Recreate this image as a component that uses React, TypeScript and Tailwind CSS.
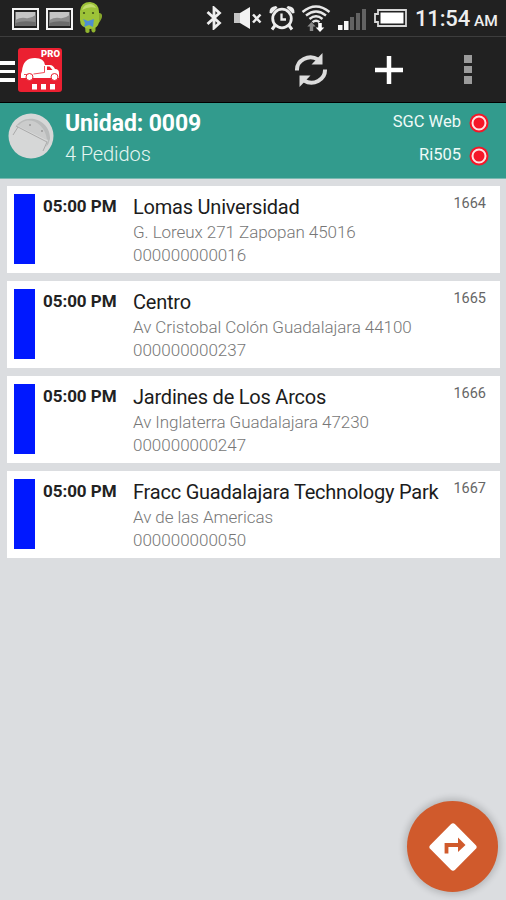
import { clsx } from "clsx";

type Order = {
  id: string;
  time: string;
  place: string;
  address: string;
  phone: string;
};

const orders: Order[] = [
  {
    id: "1664",
    time: "05:00 PM",
    place: "Lomas Universidad",
    address: "G. Loreux 271 Zapopan 45016",
    phone: "000000000016",
  },
  {
    id: "1665",
    time: "05:00 PM",
    place: "Centro",
    address: "Av Cristobal Colón Guadalajara 44100",
    phone: "000000000237",
  },
  {
    id: "1666",
    time: "05:00 PM",
    place: "Jardines de Los Arcos",
    address: "Av Inglaterra Guadalajara 47230",
    phone: "000000000247",
  },
  {
    id: "1667",
    time: "05:00 PM",
    place: "Fracc Guadalajara Technology Park",
    address: "Av de las Americas",
    phone: "000000000050",
  },
];

function PictureIcon({ className }: { className?: string }) {
  return (
    <svg viewBox="0 0 27 22" className={clsx("h-[22px] w-[27px] translate-y-px", className)}>
      <rect x="1" y="1" width="25" height="20" fill="#222" stroke="#f4f4f4" strokeWidth="2" />
      <rect x="3.5" y="4" width="20" height="14" fill="#c4c4c4" />
      <path d="M3.5 12q5-3 10-2t10-3v11h-20Z" fill="#8b8b8b" />
      <path d="M3.5 15q7-3 20-1v4h-20Z" fill="#6b6b6b" />
    </svg>
  );
}

function DroidIcon() {
  return (
    <svg viewBox="0 0 24 32" className="ml-1.5 h-8 w-6">
      <path d="M16 11q8-1 7 4t-7 9Z" fill="#86a52b" />
      <path d="M6 24h4.500v6q-2 2-4 0ZM12 24h4.500v5q-2 3-4 0Z" fill="#91b52f" />
      <path d="M1 9Q2 0 11 0q9 1 9 10v10q-1 7-9 7-10-1-10-9Z" fill="#9dc338" />
      <path d="M3 8q2-6 8-6 4 0 6 4-7-2-14 2Z" fill="#c2dc6d" />
      <circle cx="5" cy="11" r="1.1" fill="#44561b" />
      <circle cx="14" cy="11" r="1.1" fill="#44561b" />
      <path d="m4 17 5 2 6-2-1 8-4-2-5 2 1-4Z" fill="#4e8ed2" />
    </svg>
  );
}

function BluetoothIcon() {
  return (
    <svg viewBox="0 0 16 24" className="h-6 w-4" fill="none" stroke="#eee" strokeWidth="2.800">
      <path d="m1.500 6 12 11L8 22V2l5.500 5L1.500 18" />
    </svg>
  );
}

function MuteIcon() {
  return (
    <svg viewBox="0 0 28 24" className="ml-3 h-6 w-7">
      <path d="M0 7h6v10H0Z" fill="#c4c4c4" />
      <path d="m6 7 10-6v22L6 17Z" fill="#f2f2f2" />
      <path d="m19 8.500 7.500 8m0-8-7.500 8" stroke="#eee" strokeWidth="2.500" />
    </svg>
  );
}

function AlarmIcon() {
  return (
    <svg viewBox="0 0 26 26" className="ml-[7px] size-[26px]" fill="none" stroke="#ededed">
      <circle cx="13" cy="13.500" r="9.300" strokeWidth="2.800" />
      <path d="M12.500 8.500v6H17" strokeWidth="2.300" />
      <path d="m6 20.500-3 4m17-4 3 4" strokeWidth="3" />
      <path d="M.5 8Q0 1.500 7 1l1.500 1.500L2.500 8.500ZM25.500 8q.5-6.500-6.500-7L17.500 2.500l6 6Z" fill="#ededed" stroke="none" />
    </svg>
  );
}

function WifiIcon() {
  return (
    <svg viewBox="0 0 30 28" className="ml-[6px] h-7 w-[30px]" fill="none">
      <path d="M1.500 8Q15-3 28.500 8M5 11.500q10-8 20 0M8.500 15q6.500-5.500 13 0M11.500 18.200q3.500-3 7 0" stroke="#e8e8e8" strokeWidth="2.400" />
      <path d="m10.500 18 4.200 4.500h-2.500V27H8.800v-4.500H6.300Z" fill="#888" />
      <path d="m19 28-4.300-4.500h2.500V19h3.600v4.500h2.500Z" fill="#fff" />
    </svg>
  );
}

function SignalIcon() {
  return (
    <svg viewBox="0 0 28 21" className="ml-[7px] h-[21px] w-7 translate-y-px">
      <path d="M0 16h4.500v5H0ZM6 12h4.500v9H6Z" fill="#f5f5f5" />
      <path d="M12 8h4v13h-4ZM18 4h4v17h-4ZM24 0h4v21h-4Z" fill="#636363" />
    </svg>
  );
}

function BatteryIcon() {
  return (
    <svg viewBox="0 0 33 18" className="ml-2 h-[18px] w-[33px]">
      <path d="M4 1h28v16H4v-4H1V5h3Z" fill="#222" stroke="#d8d8d8" strokeWidth="1.800" />
      <path d="M6.500 3.500h23v11h-23Z" fill="#fff" />
    </svg>
  );
}

function StatusBar() {
  return (
    <div className="flex h-[37px] items-center border-b border-[#3d3d3d] bg-[#212121] pl-3 text-[#eee]">
      <PictureIcon />
      <PictureIcon className="ml-[7px]" />
      <DroidIcon />
      <div className="ml-[103px] flex items-center">
        <BluetoothIcon />
        <MuteIcon />
        <AlarmIcon />
        <WifiIcon />
        <SignalIcon />
        <BatteryIcon />
      </div>
      <div className="ml-2 flex items-baseline gap-1 pt-1 leading-6 whitespace-nowrap">
        <span className="text-[22px] font-medium tracking-[-0.15px]">11:54</span>
        <span className="text-[15.500px] font-medium tracking-[-0.2px]">AM</span>
      </div>
    </div>
  );
}

function AppLogo() {
  return (
    <div className="ml-[3px] flex h-[44px] w-[44px] flex-col rounded-[3px] bg-[#eb2031]">
      <span className="h-[10px] pr-[2px] text-right text-[9.500px] leading-[11px] font-black text-white">
        PRO
      </span>
      <svg viewBox="0 0 44 34" className="h-[34px] w-[44px]">
        <path d="M4 13Q5 0 17 0q9 0 10 7h5q3 0 5 4 4 0 4 4v5H3v-4Z" fill="#fff" />
        <path d="M29 8.500h2.500l3 3.500H29Z" fill="#eb2031" />
        <path d="M26.500 8v6.500l-11 1.500M6 16.500h5" fill="none" stroke="#eb2031" strokeWidth="0.800" />
        <circle cx="11.500" cy="19" r="3.500" fill="#fff" stroke="#eb2031" />
        <circle cx="36.500" cy="19" r="3.500" fill="#fff" stroke="#eb2031" />
        <path d="M14 26h5v5.500h-5ZM23 26h5v5.500h-5ZM32 26h5v5.500h-5Z" fill="#fff" />
      </svg>
    </div>
  );
}

function AppBar() {
  return (
    <div className="flex h-[66px] items-center border-b border-black bg-[#212121]">
      <div className="flex w-[15px] translate-y-0.5 flex-col gap-[5px]">
        <span className="h-[3.500px] bg-white" />
        <span className="h-[3.500px] bg-white" />
        <span className="h-[3.500px] bg-white" />
      </div>
      <AppLogo />
      <button type="button" aria-label="Actualizar" className="mr-px ml-auto">
        <svg viewBox="0 0 34 34" className="size-[34px]">
          <path d="M3 17.500A13.500 12.500 0 0 1 24 6.500" fill="none" stroke="#dcdcdc" strokeWidth="4" />
          <path d="M28.500 0v11.500H17.500Z" fill="#dcdcdc" />
          <path d="M31 16.500A13.500 12.500 0 0 1 10 27.500" fill="none" stroke="#dcdcdc" strokeWidth="4" />
          <path d="M5.500 34V22.500h11Z" fill="#dcdcdc" />
        </svg>
      </button>
      <button type="button" aria-label="Agregar" className="ml-[45px]">
        <svg viewBox="0 0 30 30" className="size-[30px]">
          <path d="M15 1v28M1 15h28" stroke="#fff" strokeWidth="4.500" />
        </svg>
      </button>
      <button type="button" aria-label="Más" className="mr-[34px] ml-[60px] flex flex-col gap-[3px]">
        <span className="h-[7.500px] w-2 bg-[#9b9b9b]" />
        <span className="h-[7.500px] w-2 bg-[#9b9b9b]" />
        <span className="h-[7.500px] w-2 bg-[#9b9b9b]" />
      </button>
    </div>
  );
}

function Connection({ label }: { label: string }) {
  return (
    <div className="flex h-[33px] items-center justify-end gap-[8px] text-[16.500px] text-[#effaf7]">
      <span className="-translate-y-px">{label}</span>
      <svg viewBox="0 0 20 20" className="size-5 -translate-y-px">
        <circle cx="10" cy="10" r="9.500" fill="#f51628" />
        <circle cx="10" cy="10" r="6.500" fill="#f51628" stroke="#ffe3e3" strokeWidth="2" />
      </svg>
    </div>
  );
}

function UnitHeader() {
  return (
    <div className="flex h-[76px] border-b border-[#79b9b1] bg-[#329b8d] pr-[17px] pl-2">
      <svg viewBox="0 0 46 46" className="mt-[10px] size-[46px]">
        <circle cx="23" cy="23" r="22.500" fill="#d6d7d7" />
        <path d="M7 15C16-2 43 6 42 26q-1 5-4 8l2-7L10 12Z" fill="#b9bbbb" />
        <path d="M9 15C17 1 37 8 39 27L10 13Z" fill="#cbcccc" />
        <path d="m8 13 31 16-4 9M10 14l-5 8" fill="none" stroke="#aaa" />
        <circle cx="22" cy="12" r="1" fill="#999" />
        <circle cx="34" cy="18" r="1" fill="#999" />
      </svg>
      <div className="ml-[11px] pt-[6px]">
        <h1 className="text-[23px] leading-[30px] font-bold tracking-[-0.1px] text-white">Unidad: 0009</h1>
        <p className="text-[20px] leading-[30px] font-light tracking-[-0.1px] text-[#e5f6f2]">4 Pedidos</p>
      </div>
      <div className="ml-auto pt-1">
        <Connection label="SGC Web" />
        <Connection label="Ri505" />
      </div>
    </div>
  );
}

function OrderCard({ order }: { order: Order }) {
  return (
    <li className="flex h-[87px] bg-white pt-2 pr-[14px] pl-[7px]">
      <span className="h-[70px] w-[21px] bg-[#0018ff]" />
      <span className="ml-2 w-[90px] text-[17px] leading-6 font-bold tracking-[-0.05px] text-[#222]">
        {order.time}
      </span>
      <div className="min-w-0 flex-1 whitespace-nowrap">
        <h2 className="text-[20px] leading-[27px] tracking-[-0.22px] text-[#1c1c1c]">{order.place}</h2>
        <p className="text-[17px] leading-[23px] font-light tracking-[-0.06px] text-[#777]">{order.address}</p>
        <p className="text-[17px] leading-[23px] font-light text-[#777]">{order.phone}</p>
      </div>
      <span className="text-[14.500px] leading-[19px] text-[#666]">{order.id}</span>
    </li>
  );
}

export default function App() {
  return (
    <div className="relative h-[900px] w-[506px] overflow-hidden bg-[#dbdde0] font-[Roboto,sans-serif]">
      <StatusBar />
      <AppBar />
      <UnitHeader />
      <ul className="flex flex-col gap-[8.100px] pt-[7px] pr-[6px] pl-[7px]">
        {orders.map((order) => (
          <OrderCard key={order.id} order={order} />
        ))}
      </ul>
      <button
        type="button"
        aria-label="Ruta"
        className="absolute right-2 bottom-2 flex size-[91px] items-center justify-center rounded-full bg-[#d05a2c] shadow-[0_0_6px_3px_rgba(0,0,0,0.16)]"
      >
        <svg viewBox="0 0 50 50" className="size-[50px]">
          <rect x="7.500" y="7.500" width="35" height="35" rx="3" transform="rotate(45 25 25)" fill="#fff" />
          <path d="M18.500 31.500V23h13" fill="none" stroke="#d05a2c" strokeWidth="3.800" />
          <path d="m30 15.500 7.500 7.500-7.500 7Z" fill="#d05a2c" />
        </svg>
      </button>
    </div>
  );
}
